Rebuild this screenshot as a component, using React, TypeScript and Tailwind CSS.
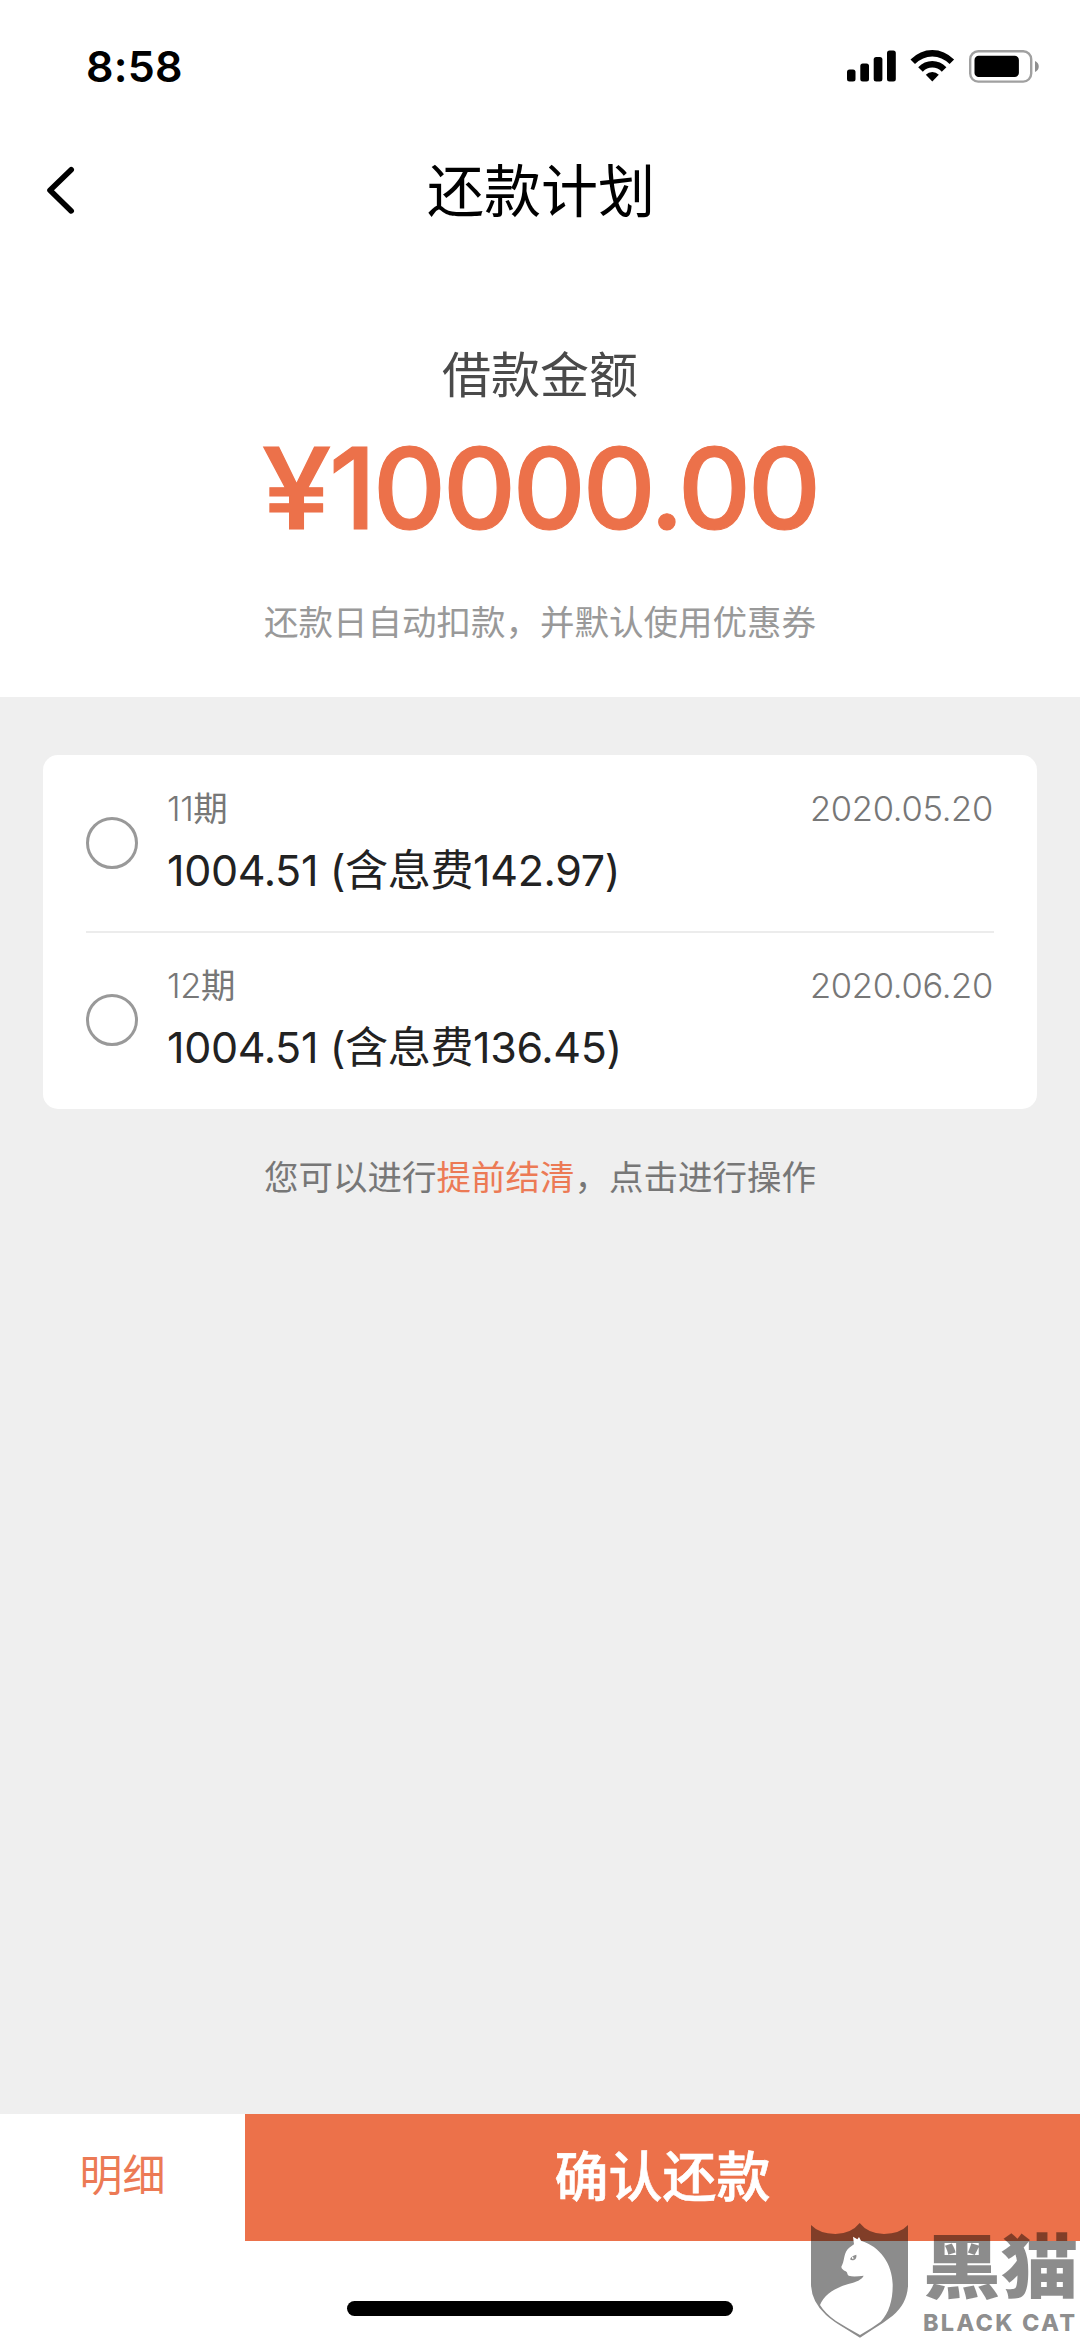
import { useState } from "react";

interface Installment {
  term: number;
  amount: string;
  fee: string;
  date: string;
}

const installments: Installment[] = [
  { term: 11, amount: "1004.51", fee: "142.97", date: "2020.05.20" },
  { term: 12, amount: "1004.51", fee: "136.45", date: "2020.06.20" },
];

const StatusBar = () => (
  <div className="flex h-[132px] shrink-0 items-center justify-between pl-[86px] pr-[40px]">
    <span className="text-[43px] font-semibold leading-none tracking-[0.2px]">8:58</span>
    <div className="flex items-center">
      {/* Signal */}
      <svg width="49" height="32" viewBox="0 0 49 32">
        <rect x="0" y="19.5" width="8.5" height="12" rx="2.5" />
        <rect x="13.3" y="13.5" width="8.7" height="18" rx="2.5" />
        <rect x="26.7" y="7" width="8.7" height="24.5" rx="2.5" />
        <rect x="40" y="0.5" width="8.8" height="31" rx="2.5" />
      </svg>
      {/* Wifi */}
      <svg className="ml-[14px]" width="45" height="32" viewBox="0 0 45 32">
        <path d="M0.5 9.6Q10 0 22.3 0T44.1 9.6L39.6 14Q32 6.4 22.3 6.4T5 14Z" />
        <path d="M8.2 17.2Q14.3 11 22.3 11T36.4 17.2L31.8 21.8Q27.8 17.6 22.3 17.6T12.8 21.8Z" />
        <path d="M15.8 24.8Q18.5 22 22.3 22T28.8 24.8L22.3 31.6Z" />
      </svg>
      {/* Battery */}
      <svg className="ml-[14px]" width="71" height="33" viewBox="0 0 71 33">
        <rect x="1.2" y="1.2" width="61" height="30.4" rx="8" fill="none" stroke="#a0a0a0" strokeWidth="2.4" />
        <rect x="5.5" y="5.7" width="44.4" height="21.4" rx="4.2" />
        <path d="M66 11C71 13 71 20 66 22Z" fill="#8f8f8f" />
      </svg>
    </div>
  </div>
);

const NavBar = () => (
  <div className="grid h-[117px] shrink-0 grid-cols-[120px_1fr_120px] items-center">
    <button className="ml-[45px] w-[31px]" aria-label="返回">
      <svg width="31" height="50" viewBox="0 0 31 50" fill="none" stroke="#000" strokeWidth="5.6" strokeLinecap="round" strokeLinejoin="round">
        <path d="M26.2 3.8L5 24.2L26.2 44.9" />
      </svg>
    </button>
    <h1 className="pt-[3px] pl-[2px] text-center text-[57px] leading-[80px]">还款计划</h1>
  </div>
);

const AmountHeader = () => (
  <div className="flex h-[448px] shrink-0 flex-col items-center pt-[92px]">
    <p className="text-[49px] leading-[70px] text-[#4a4a4a]">借款金额</p>
    <p className="mt-[22px] flex text-[113px] font-medium leading-[110px] tracking-[-3px] text-[#ec714a] [-webkit-text-stroke:1.2px_#ec714a]">
      <span className="mr-[7px] origin-left scale-x-[1.1]">¥</span>
      <span>10000.00</span>
    </p>
    <p className="mt-[55px] text-[34.5px] leading-[50px] text-[#999]">还款日自动扣款，并默认使用优惠券</p>
  </div>
);

interface InstallmentRowProps {
  item: Installment;
  checked: boolean;
  onToggle: () => void;
}

const InstallmentRow = ({ item, checked, onToggle }: InstallmentRowProps) => (
  <div className="flex h-[177px] items-start" onClick={onToggle}>
    <span
      className={`mt-[62px] size-[52px] shrink-0 rounded-full border-[3.5px] border-[#999] ${checked ? "bg-[#ec714a]" : ""}`}
    />
    <div className="ml-[29px] flex-1 pt-[29px]">
      <div className="flex justify-between text-[34.5px] leading-[50px] text-[#777]">
        <span>
          <span className="font-light tracking-[-0.4px]">{item.term}</span>期
        </span>
        <span className="pr-px font-light tracking-[-0.3px]">{item.date}</span>
      </div>
      <p className="mt-[6px] text-[43px] leading-[60px] tracking-[-0.35px] text-[#222]">
        {item.amount} (含息费{item.fee})
      </p>
    </div>
  </div>
);

const BlackCatMark = () => (
  <div className="pointer-events-none absolute bottom-0 right-0 flex h-[116px] w-[269px] text-black/45">
    <svg className="shrink-0" width="97" height="115" viewBox="93 102 291 345">
      <path
        d="M93 108Q118 134 166 135Q214 134 239 102Q264 134 312 135Q360 134 384 108V292Q380 346 338 380Q310 402 280 420L240 446L198 420Q160 398 138 378Q94 338 93 286Z"
        fill="currentColor"
      />
      <path
        d="M219 143L232 151L237 144L243 155C300 172 337 225 338 285C339 330 328 372 302 398Q275 418 240 438Q200 416 168 396Q136 374 120 348C132 318 165 296 205 285C230 279 245 272 251 260C234 262 218 264 206 260C200 256 204 250 197 247C190 243 184 239 184 233C194 218 190 197 203 181C209 174 217 170 222 166Z"
        fill="#fff"
      />
      <path d="M210 211Q214 200 229 197Q231 208 222 213Q215 215 210 211Z" fill="#8f8f8f" />
      <path d="M216 203Q222 202 220 211Q214 210 216 203Z" fill="#fff" />
    </svg>
    <div className="flex flex-1 flex-col items-start pl-[15px]">
      <span className="mt-[10px] origin-left scale-x-[1.11] whitespace-nowrap text-[70px] font-black leading-[70px]">黑猫</span>
      <span className="mt-[8px] whitespace-nowrap text-[23.5px] font-extrabold leading-[24px] tracking-[2.2px]">BLACK CAT</span>
    </div>
  </div>
);

const App = () => {
  const [selected, setSelected] = useState<number[]>([]);

  const toggle = (term: number) => {
    setSelected((prev) => (prev.includes(term) ? prev.filter((t) => t !== term) : [...prev, term]));
  };

  return (
    <div className="relative flex h-[2339px] w-[1080px] flex-col overflow-hidden bg-white font-[Inter,'Noto_Sans_CJK_SC',sans-serif] text-black">
      <StatusBar />
      <NavBar />
      <AmountHeader />

      <main className="flex-1 bg-[#efefef] px-[43px] pt-[58px]">
        <div className="h-[354px] rounded-[15px] bg-white px-[43px]">
          {installments.map((item, index) => (
            <div key={item.term} className={index > 0 ? "shadow-[0_-1px_0_#ececec,inset_0_1px_0_#ececec]" : ""}>
              <InstallmentRow
                item={item}
                checked={selected.includes(item.term)}
                onToggle={() => toggle(item.term)}
              />
            </div>
          ))}
        </div>
        <p className="mt-[44px] text-center text-[34.5px] leading-[50px] text-[#777]">
          您可以进行<span className="text-[#ec7a55]">提前结清</span>，点击进行操作
        </p>
      </main>

      {/* Bottom actions */}
      <footer className="h-[225px] shrink-0 bg-white">
        <div className="flex h-[127px]">
          <button className="w-[245px] pb-[4px] text-[43px] text-[#ec7a55]">明细</button>
          <button className="flex-1 bg-[#ec714a] text-[54px] font-medium text-white [-webkit-text-stroke:0.6px_white]">确认还款</button>
        </div>
        <div className="mx-auto mt-[60px] h-[15px] w-[386px] rounded-full bg-black" />
      </footer>

      <BlackCatMark />
    </div>
  );
};

export default App;
